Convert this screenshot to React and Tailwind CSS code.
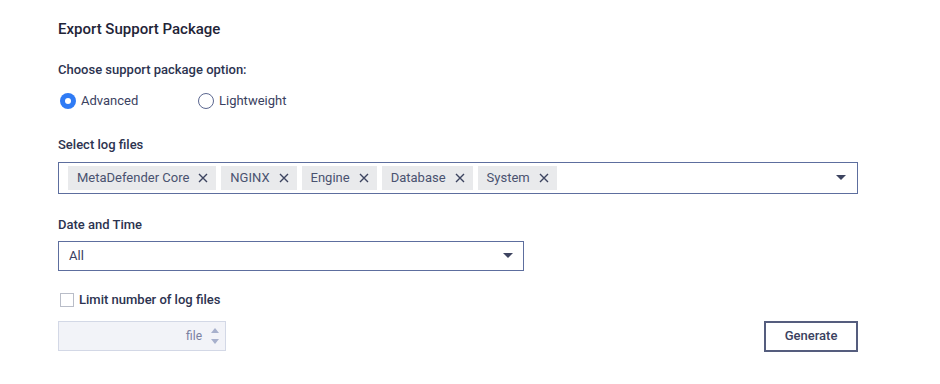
import React from 'react';

const font = { fontFamily: 'Roboto, "Noto Sans", sans-serif' };

// ─── Small pieces ──────────────────────────────────────────────

const Caret = () => (
  <svg width="10" height="6" viewBox="0 0 10 6" className="shrink-0">
    <path d="M0 0 L10 0 L5 5 Z" fill="#3d4460" />
  </svg>
);

const XIcon = () => (
  <svg width="10" height="10" viewBox="0 0 10 10" className="shrink-0">
    <path d="M1 1 L9 9 M9 1 L1 9" stroke="#3d4460" strokeWidth="1.4" />
  </svg>
);

const Tag = ({ label }) => (
  <div className="flex items-center gap-[9px] h-[24px] bg-[#e9eaec] pl-[9px] pr-[8px] text-[13px] text-[#4a5270]">
    <span>{label}</span>
    <XIcon />
  </div>
);

const Radio = ({ checked, label }) => (
  <label className="flex items-center gap-[5px] text-[13px] text-[#3a4160]">
    {checked ? (
      <span className="w-[16px] h-[16px] rounded-full bg-[#2f7bf5] flex items-center justify-center">
        <span className="w-[6px] h-[6px] rounded-full bg-white" />
      </span>
    ) : (
      <span className="w-[16px] h-[16px] rounded-full border border-[#5b6790] bg-white" />
    )}
    <span>{label}</span>
  </label>
);

// ─── Main Component ────────────────────────────────────────────

const logFiles = ['MetaDefender Core', 'NGINX', 'Engine', 'Database', 'System'];

export default function App() {
  return (
    <div className="w-[940px] h-[384px] bg-white pl-[58px] pt-[19px]" style={font}>
      <h2 className="text-[15px] leading-[20px] font-medium text-[#1f2437]">Export Support Package</h2>

      {/* Package option */}
      <div className="mt-[22px] text-[13px] leading-[18px] font-medium text-[#2c3350]">Choose support package option:</div>
      <div className="flex items-center mt-[12px] ml-[2px]">
        <div className="w-[138px]"><Radio checked label="Advanced" /></div>
        <Radio label="Lightweight" />
      </div>

      {/* Log files */}
      <div className="mt-[25px] text-[13px] leading-[18px] font-medium text-[#2c3350]">Select log files</div>
      <div className="mt-[8px] w-[800px] h-[32px] border border-[#5d6e9e] flex items-center pl-[9px] pr-[11px]">
        <div className="flex items-center gap-[5px] flex-1">
          {logFiles.map((f) => <Tag key={f} label={f} />)}
        </div>
        <Caret />
      </div>

      {/* Date and time */}
      <div className="mt-[22px] text-[13px] leading-[18px] font-medium text-[#2c3350]">Date and Time</div>
      <div className="mt-[7px] w-[466px] h-[30px] border border-[#5d6e9e] flex items-center pl-[10px] pr-[10px] text-[13px] text-[#3a4160]">
        <span className="flex-1">All</span>
        <Caret />
      </div>

      {/* Limit */}
      <label className="mt-[20px] flex items-center gap-[5px] ml-[2px] text-[13px] leading-[18px] font-medium text-[#2c3350]">
        <span className="w-[14px] h-[14px] border border-[#b9bdc8] bg-white" />
        <span>Limit number of log files</span>
      </label>

      <div className="mt-[12px] flex items-center w-[800px]">
        <div className="w-[168px] h-[30px] bg-[#f2f3f8] border border-[#d3d8e6] flex items-center justify-end pr-[6px] gap-[9px]">
          <span className="text-[12px] text-[#7a80a0]">file</span>
          <div className="flex flex-col gap-[6px]">
            <svg width="8" height="5" viewBox="0 0 8 5"><path d="M0 5 L8 5 L4 0 Z" fill="#a7b0cc" /></svg>
            <svg width="8" height="5" viewBox="0 0 8 5"><path d="M0 0 L8 0 L4 5 Z" fill="#a7b0cc" /></svg>
          </div>
        </div>
        <div className="flex-1" />
        <button className="w-[94px] h-[31px] border-2 border-[#555d7e] text-[13px] font-medium text-[#3a4160]">Generate</button>
      </div>
    </div>
  );
}
